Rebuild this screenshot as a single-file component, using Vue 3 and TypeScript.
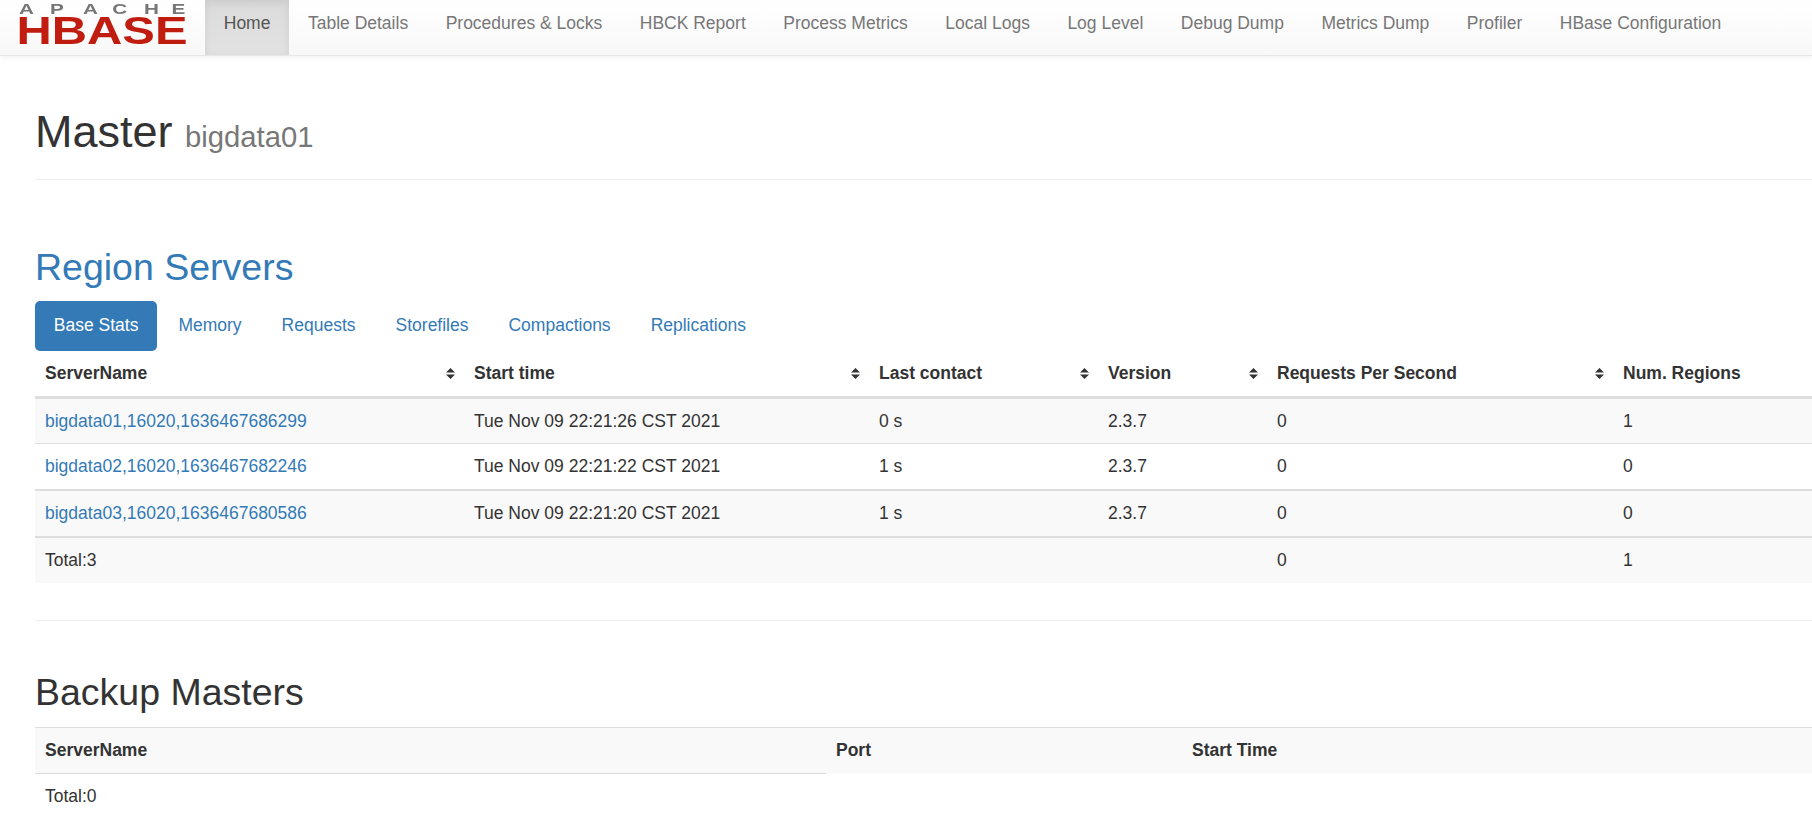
<template>
  <div class="page">
    <nav class="navbar">
      <svg class="logo" width="167" height="44" viewBox="0 0 167 44" role="img" aria-label="Apache HBase">
        <text class="logo-apache" transform="scale(1.38 1)" x="0 22.5 46.4 67.6 90.5 110.5" y="14.5">APACHE</text>
        <text class="logo-hbase" x="-2.5" y="44" textLength="171" lengthAdjust="spacingAndGlyphs">HBASE</text>
      </svg>
      <ul class="nav-links">
        <li v-for="(item, i) in navItems" :key="item" :class="{ active: i === 0 }">{{ item }}</li>
      </ul>
    </nav>

    <main class="content">
      <header class="page-header">
        <h1>Master <small>bigdata01</small></h1>
      </header>

      <section class="servers">
        <h2 class="link-title">Region Servers</h2>
        <ul class="tabs">
          <li v-for="(tab, i) in tabs" :key="tab" :class="{ active: i === 0 }">{{ tab }}</li>
        </ul>
        <table class="stats">
          <colgroup>
            <col v-for="w in statWidths" :key="w" :style="{ width: w + 'px' }" />
          </colgroup>
          <thead>
            <tr>
              <th v-for="(h, i) in statHeads" :key="h">
                <div class="th-inner">
                  <span>{{ h }}</span>
                  <svg v-if="i < statHeads.length - 1" class="sort" width="9" height="11" viewBox="0 0 9 11">
                    <path d="M4.5 0 L9 4.5 H0 Z M0 6.5 H9 L4.5 11 Z" fill="#333" />
                  </svg>
                </div>
              </th>
            </tr>
          </thead>
          <tbody>
            <tr v-for="s in servers" :key="s.name">
              <td><a>{{ s.name }}</a></td>
              <td>{{ s.start }}</td>
              <td>{{ s.contact }}</td>
              <td>{{ s.version }}</td>
              <td>{{ s.rps }}</td>
              <td>{{ s.regions }}</td>
            </tr>
          </tbody>
          <tfoot>
            <tr>
              <td>Total:3</td>
              <td></td>
              <td></td>
              <td></td>
              <td>0</td>
              <td>1</td>
            </tr>
          </tfoot>
        </table>
      </section>

      <hr class="rule" />

      <section>
        <h2>Backup Masters</h2>
        <table class="backup">
          <colgroup>
            <col style="width: 791px" />
            <col style="width: 356px" />
            <col />
          </colgroup>
          <thead>
            <tr>
              <th>ServerName</th>
              <th>Port</th>
              <th>Start Time</th>
            </tr>
          </thead>
          <tbody>
            <tr>
              <td>Total:0</td>
              <td></td>
              <td></td>
            </tr>
          </tbody>
        </table>
      </section>
    </main>
  </div>
</template>

<script setup lang="ts">
interface Server {
  name: string;
  start: string;
  contact: string;
  version: string;
  rps: number;
  regions: number;
}

const navItems: string[] = [
  'Home',
  'Table Details',
  'Procedures & Locks',
  'HBCK Report',
  'Process Metrics',
  'Local Logs',
  'Log Level',
  'Debug Dump',
  'Metrics Dump',
  'Profiler',
  'HBase Configuration'
];

const tabs: string[] = ['Base Stats', 'Memory', 'Requests', 'Storefiles', 'Compactions', 'Replications'];

const statHeads: string[] = ['ServerName', 'Start time', 'Last contact', 'Version', 'Requests Per Second', 'Num. Regions'];
const statWidths: number[] = [429, 405, 229, 169, 346, 199];

const servers: Server[] = [
  { name: 'bigdata01,16020,1636467686299', start: 'Tue Nov 09 22:21:26 CST 2021', contact: '0 s', version: '2.3.7', rps: 0, regions: 1 },
  { name: 'bigdata02,16020,1636467682246', start: 'Tue Nov 09 22:21:22 CST 2021', contact: '1 s', version: '2.3.7', rps: 0, regions: 0 },
  { name: 'bigdata03,16020,1636467680586', start: 'Tue Nov 09 22:21:20 CST 2021', contact: '1 s', version: '2.3.7', rps: 0, regions: 0 }
];
</script>

<style>
html,
body {
  margin: 0;
  background: #fff;
  overflow: hidden;
}
</style>

<style scoped>
.page {
  width: 1812px;
  height: 818px;
  overflow: hidden;
  font-family: "Liberation Sans", Arial, sans-serif;
  font-size: 17.5px;
  line-height: 25px;
  color: #333;
}

.navbar {
  display: flex;
  height: 55px;
  padding-left: 19px;
  background: linear-gradient(to bottom, #fff 0%, #f8f8f8 100%);
  border-bottom: 1px solid #e7e7e7;
  box-shadow: 0 1px 6px rgba(0, 0, 0, 0.07);
}

.logo {
  flex: none;
  margin-right: 19px;
  overflow: visible;
  filter: blur(0.4px);
}

.logo-apache {
  font-size: 15px;
  font-weight: 700;
  fill: #777;
}

.logo-hbase {
  font-size: 39px;
  font-weight: 700;
  fill: #c01d10;
}

.nav-links {
  display: flex;
  margin: 0;
  padding: 0;
  list-style: none;
}

.nav-links li {
  padding: 11px 18.75px 19px;
  color: #777;
  white-space: nowrap;
}

.nav-links li.active {
  color: #555;
  background: linear-gradient(to bottom, #dbdbdb 0%, #e2e2e2 100%);
  box-shadow: inset 0 3px 9px rgba(0, 0, 0, 0.075);
}

.content {
  padding-left: 35px;
}

.page-header {
  margin-top: 51px;
  padding-bottom: 17px;
  border-bottom: 1px solid #eee;
}

h1 {
  margin: 0;
  font-size: 45px;
  font-weight: 500;
  line-height: 50px;
}

h1 small {
  font-size: 29.25px;
  font-weight: 400;
  color: #777;
}

h2 {
  margin: 0;
  font-size: 37.5px;
  font-weight: 500;
  line-height: 41px;
}

.servers {
  margin-top: 67px;
}

.link-title {
  color: #337ab7;
}

.tabs {
  display: flex;
  margin: 13px 0 0;
  padding: 0;
  list-style: none;
  color: #337ab7;
}

.tabs li {
  padding: 12px 18.75px 13px;
  margin-right: 2.5px;
  border-radius: 5px;
}

.tabs li.active {
  color: #fff;
  background: #337ab7;
}

table {
  table-layout: fixed;
  width: 1777px;
  border-collapse: collapse;
  border-spacing: 0;
}

th {
  padding: 10px;
  font-weight: 700;
  text-align: left;
}

td {
  padding: 10px;
  height: 25px;
}

a {
  color: #337ab7;
}

.th-inner {
  display: flex;
  align-items: center;
  justify-content: space-between;
}

.sort {
  flex: none;
  margin-right: -1px;
}

.stats thead th {
  border-bottom: 3px solid #ddd;
}

.stats td {
  border-top: 1px solid #ddd;
}

.stats tbody tr:first-child td {
  padding-bottom: 9px;
}

.stats tbody tr:nth-child(3) td,
.stats tfoot td {
  border-top-width: 2px;
}

.stats tbody tr:nth-child(odd),
.stats tfoot tr {
  background: #f9f9f9;
}

.rule {
  margin: 37px 0 0;
  border: 0;
  border-top: 1px solid #eee;
}

.rule + section {
  margin-top: 51px;
}

.backup {
  margin-top: 14px;
}

.backup th {
  background: #f9f9f9;
  border-top: 1px solid #ddd;
}

.backup th:first-child {
  border-bottom: 1px solid #ddd;
}
</style>
